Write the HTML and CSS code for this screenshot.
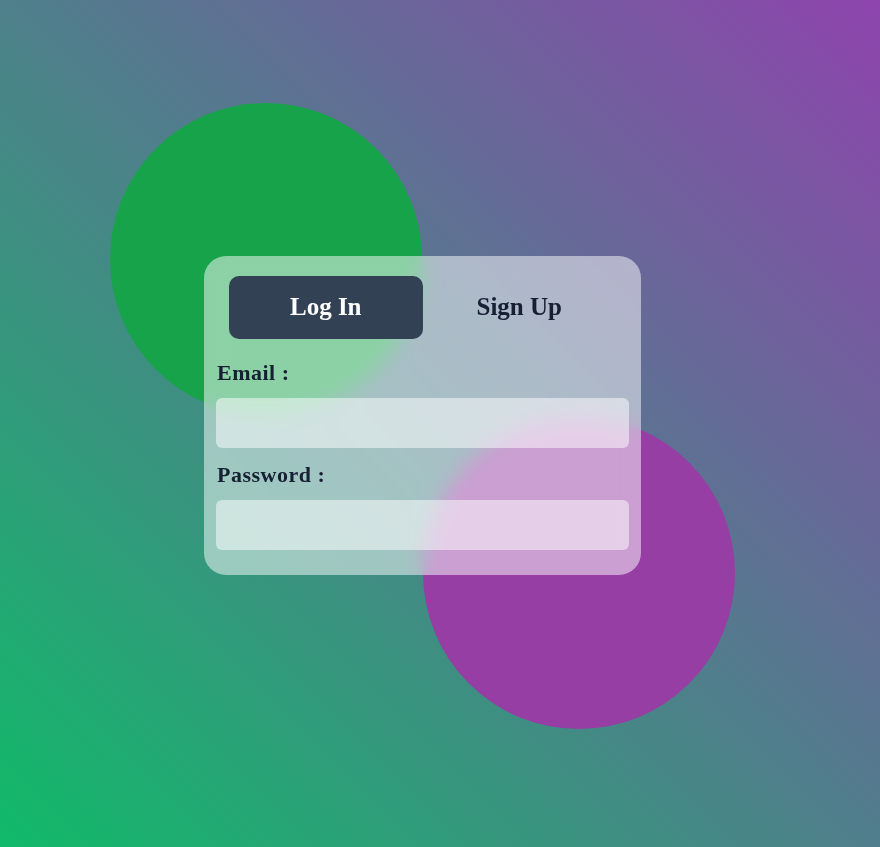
FILE: index.html
```html
<!DOCTYPE html>
<html lang="en">
<head>
<meta charset="utf-8">
<title>Login</title>
<link rel="stylesheet" href="styles.css">
</head>
<body>
<main class="stage">
  <div class="scene">
    <div class="circle circle-green"></div>
    <div class="circle circle-purple"></div>
    <form class="card">
      <div class="tabs">
        <button type="button" class="tab tab-active">Log In</button>
        <button type="button" class="tab">Sign Up</button>
      </div>
      <label class="label label-first" for="email">Email :</label>
      <input class="field" id="email" type="email">
      <label class="label label-next" for="password">Password :</label>
      <input class="field" id="password" type="password">
    </form>
  </div>
</main>
</body>
</html>
```
FILE: styles.css
```css
* { box-sizing: border-box; }
html, body { margin: 0; height: 100%; }
body {
  background: linear-gradient(45deg, #10ba69 0%, #8e44ad 100%);
  font-family: "Liberation Serif", "Times New Roman", serif;
  overflow: hidden;
}
.stage {
  height: 100vh;
  display: flex;
  align-items: center;
  justify-content: center;
  padding-right: 35px;
  padding-bottom: 16px;
}
.scene {
  position: relative;
  width: 437px;
}
.circle {
  position: absolute;
  width: 312px;
  height: 312px;
  border-radius: 50%;
}
.circle-green {
  left: -94px;
  top: -153px;
  background: #17a34a;
}
.circle-purple {
  left: 219px;
  top: 161px;
  background: #963ea3;
}
.card {
  position: relative;
  display: flex;
  flex-direction: column;
  padding: 20px 12px 25px;
  border-radius: 22px;
  background: rgba(255, 255, 255, 0.5);
  backdrop-filter: blur(10px);
  -webkit-backdrop-filter: blur(10px);
}
.tabs {
  display: grid;
  grid-template-columns: 1fr 1fr;
  margin: 0 13px 20px;
}
.tab {
  height: 63px;
  border: none;
  border-radius: 10px;
  background: transparent;
  font-family: inherit;
  font-weight: bold;
  font-size: 25px;
  color: #172033;
  padding: 0 0 2px;
}
.tab-active {
  background: #334155;
  color: #ffffff;
}
.label {
  display: block;
  font-weight: bold;
  font-size: 22px;
  line-height: 25px;
  letter-spacing: 0.5px;
  color: #172033;
  padding: 1px 0 0 1px;
  height: 25px;
  margin-bottom: 14px;
}
.label-next { margin-top: 13px; }
.field {
  height: 50px;
  width: 100%;
  border: none;
  border-radius: 6px;
  background: rgba(255, 255, 255, 0.5);
  outline: none;
}
```
